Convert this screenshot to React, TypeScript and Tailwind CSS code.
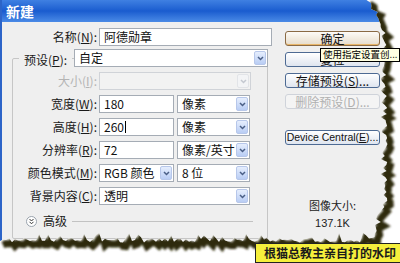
import React from "react";

const cjk = "font-['Noto_Sans_CJK_SC','Liberation_Sans',sans-serif]";

function rng(seed: number) {
  let s = seed;
  return () => {
    s = (s * 16807) % 2147483647;
    return s / 2147483647;
  };
}

function tornPoints() {
  const r = rng(11);
  const right: [number, number][] = [];
  for (let y = 0; y <= 238; y += 3) {
    const base = y < 30 ? 370 + y * 0.45 : y < 200 ? 384 : 384 - (y - 200) * 0.25;
    right.push([base + (r() - 0.5) * 7, y]);
  }
  const bottom: [number, number][] = [];
  for (let x = 372; x >= 0; x -= 3) {
    bottom.push([x, 240 + (r() - 0.5) * 5 - (r() > 0.85 ? 5 : 0)]);
  }
  return [...right, ...bottom, [0, 240] as [number, number]];
}

const TornEdge = () => {
  const pts = tornPoints();
  const d = "M0 0 L" + pts.map(([x, y]) => `${x.toFixed(1)} ${y.toFixed(1)}`).join(" L") + " Z";
  const edge = pts.slice(0, -1).map(([x, y]) => `${(x + 3).toFixed(1)},${(y + 4).toFixed(1)}`).join(" ");
  return (
    <svg className="pointer-events-none absolute left-0 top-0" width="400" height="263">
      <defs>
        <filter id="blur" x="-10%" y="-10%" width="120%" height="120%">
          <feGaussianBlur stdDeviation="1.2" />
        </filter>
        <clipPath id="outside">
          <path d={"M0 0 H400 V263 H0 Z " + d} clipRule="evenodd" />
        </clipPath>
      </defs>
      <path d={"M0 0 H400 V263 H0 Z " + d} fill="#ffffff" fillRule="evenodd" />
      <g clipPath="url(#outside)">
        <polyline points={edge} fill="none" stroke="#2e2c0c" strokeWidth="7" filter="url(#blur)" />
      </g>
    </svg>
  );
};

const Arrow = ({ disabled }: { disabled?: boolean }) => (
  <span
    className={`flex h-[14px] w-[12px] items-center justify-center rounded-[2px] border ${
      disabled ? "border-[#e2e4e8] bg-[#f3f4f6]" : "border-[#b7c7ea] bg-gradient-to-b from-[#e6eefd] to-[#b9cdf4]"
    }`}
  >
    <svg width="7" height="5" viewBox="0 0 7 5">
      <path d="M1 1l2.5 2.5L6 1" stroke={disabled ? "#c4c8d0" : "#4a5f86"} strokeWidth="1.5" fill="none" />
    </svg>
  </span>
);

const Select = ({ value, w, disabled }: { value: string; w: string; disabled?: boolean }) => (
  <div
    className={`flex h-[18px] items-center justify-between whitespace-nowrap border pl-[4px] pr-[1px] text-[12px] leading-none ${w} ${
      disabled ? "border-[#d0d3d8] bg-[#f2f2f2]" : "border-[#a5acb5] bg-white"
    }`}
  >
    <span className="text-[#111]">{value}</span>
    <Arrow disabled={disabled} />
  </div>
);

const Input = ({ value, w, caret }: { value: string; w: string; caret?: boolean }) => (
  <div className={`flex h-[18px] items-center whitespace-nowrap border border-[#a5acb5] bg-white pl-[4px] text-[12px] leading-none text-[#111] ${w}`}>
    {value}
    {caret && <span className="ml-px h-[12px] w-px bg-black" />}
  </div>
);

const Label = ({ text, k, disabled }: { text: string; k: string; disabled?: boolean }) => (
  <span className={`whitespace-nowrap text-[12px] leading-none ${disabled ? "text-[#b4b4b4]" : "text-[#1a1a1a]"}`}>
    {text}(<u>{k}</u>):
  </span>
);

const Row = ({ label, k, disabled, children }: { label: string; k: string; disabled?: boolean; children: React.ReactNode }) => (
  <div className="flex h-[18px] items-center">
    <div className="flex w-[84px] justify-end">
      <Label text={label} k={k} disabled={disabled} />
    </div>
    <div className="ml-[2px] flex items-center gap-[3px]">{children}</div>
  </div>
);

const Button = ({ children, primary, disabled, latin }: { children: React.ReactNode; primary?: boolean; disabled?: boolean; latin?: boolean }) => (
  <div
    className={`flex h-[15px] w-[95px] items-center justify-center whitespace-nowrap rounded-[3px] border leading-none ${
      latin ? "font-['Liberation_Sans',sans-serif] text-[10.5px]" : "text-[12px]"
    } ${
      disabled
        ? "border-[#cfd3da] bg-[#f4f4f4] text-[#b0b0b0]"
        : primary
        ? "border-[#8a6a45] bg-gradient-to-b from-[#fdfbf7] to-[#e6dccb] text-[#111] shadow-[inset_0_-1px_0_#e8b66a]"
        : "border-[#4d6a93] bg-gradient-to-b from-[#ffffff] to-[#dfe5ef] text-[#111]"
    }`}
  >
    {children}
  </div>
);

export default function App() {
  return (
    <div className={`relative h-[263px] w-[400px] overflow-hidden bg-white ${cjk}`}>
      <div className="flex h-[263px] w-[400px] flex-col border-l-2 border-[#2c64c8] bg-[#efefef]">
        <div className="flex h-[22px] shrink-0 items-center bg-gradient-to-b from-[#3f80e2] via-[#1a5ccf] to-[#4a8ae6] pl-[4px]">
          <span className="text-[14px] font-bold leading-none text-white">新建</span>
        </div>

        <div className="flex">
          <div className="flex w-[283px] shrink-0 flex-col">
            <div className="mt-[6px] flex h-[18px] items-center">
              <div className="flex w-[95px] justify-end">
                <Label text="名称" k="N" />
              </div>
              <div className="ml-[2px]">
                <Input value="阿德勋章" w="w-[173px]" />
              </div>
            </div>

            <div className="ml-[10px] mt-[12px] h-[181px] w-[256px] rounded-[2px] border border-[#c6c6c6]">
              <div className="-mt-[10px] flex flex-col gap-[5px]">
                <div className="flex h-[18px] items-center">
                  <div className="ml-[6px] bg-[#efefef] px-[5px]">
                    <Label text="预设" k="P" />
                  </div>
                  <div className="ml-[2px]">
                    <Select value="自定" w="w-[194px]" />
                  </div>
                </div>
                <Row label="大小" k="I" disabled>
                  <Select value="" w="w-[152px]" disabled />
                </Row>
                <Row label="宽度" k="W">
                  <Input value="180" w="w-[75px]" />
                  <Select value="像素" w="w-[73px]" />
                </Row>
                <Row label="高度" k="H">
                  <Input value="260" w="w-[75px]" caret />
                  <Select value="像素" w="w-[73px]" />
                </Row>
                <Row label="分辨率" k="R">
                  <Input value="72" w="w-[75px]" />
                  <Select value="像素/英寸" w="w-[73px]" />
                </Row>
                <Row label="颜色模式" k="M">
                  <Select value="RGB 颜色" w="w-[75px]" />
                  <Select value="8 位" w="w-[73px]" />
                </Row>
                <Row label="背景内容" k="C">
                  <Select value="透明" w="w-[151px]" />
                </Row>
                <div className="mt-[2px] flex h-[18px] items-center pl-[13px]">
                  <span className="flex h-[11px] w-[11px] items-center justify-center rounded-full border border-[#9aa3ad] bg-white">
                    <svg width="7" height="7" viewBox="0 0 7 7">
                      <path d="M1.5 1l2 2 2-2M1.5 3.8l2 2 2-2" stroke="#333" strokeWidth="1" fill="none" />
                    </svg>
                  </span>
                  <span className="ml-[6px] whitespace-nowrap text-[12px] leading-none text-[#1a1a1a]">高级</span>
                  <span className="ml-[5px] h-px w-[181px] bg-[#c2c2c2]" />
                </div>
              </div>
            </div>
          </div>

          <div className="flex flex-col items-center">
            <div className="mt-[9px] flex flex-col gap-[6px]">
              <Button primary>确定</Button>
              <Button>复位</Button>
              <Button>
                存储预设(<u>S</u>)...
              </Button>
              <Button disabled>
                删除预设(<u>D</u>)...
              </Button>
            </div>
            <div className="mt-[21px]">
              <Button latin>
                Device Central(<u>E</u>)...
              </Button>
            </div>
            <span className="mt-[55px] whitespace-nowrap text-[11px] leading-none text-[#222]">图像大小:</span>
            <span className="mt-[7px] font-['Liberation_Sans',sans-serif] text-[11px] leading-none text-[#222]">137.1K</span>
          </div>
        </div>
      </div>

      <TornEdge />

      <div className="absolute left-[320px] top-[48px] flex h-[14px] items-center whitespace-nowrap border border-black bg-[#ffffe1] px-[2px] text-[9.5px] leading-none text-black">
        使用指定设置创...
      </div>

      <div className="absolute left-[255px] top-[243px] flex h-[20px] w-[146px] items-center whitespace-nowrap border border-[#222] bg-[#f5ef3c] pl-[8px] text-[12px] font-bold leading-none text-[#1b1b1b]">
        根猫总教主亲自打的水印
      </div>
    </div>
  );
}
